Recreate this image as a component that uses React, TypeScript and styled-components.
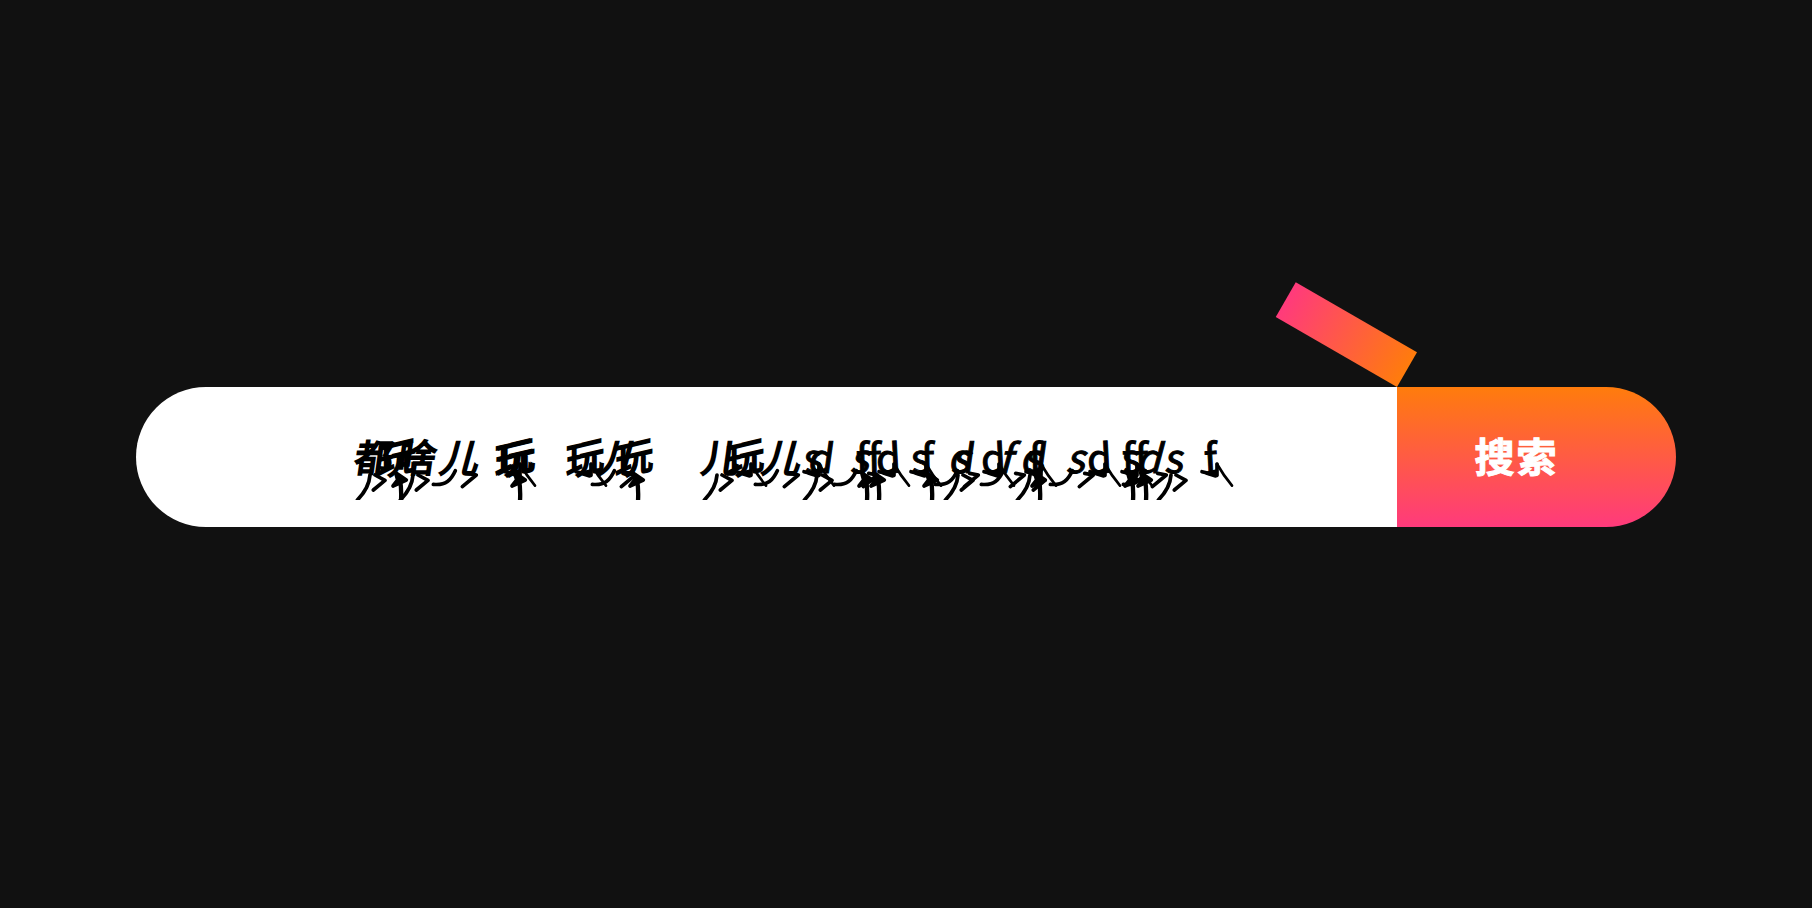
import React from "react";
import styled, { createGlobalStyle, css } from "styled-components";

type Pose = "lean" | "step" | "stand" | "stride";

const GlobalStyle = createGlobalStyle`
  body {
    margin: 0;
    background: #111;
    font-family: "Noto Sans CJK SC", "Noto Sans", sans-serif;
  }
`;

const Page = styled.main`
  box-sizing: border-box;
  min-height: 100vh;
  padding-top: 6px;
  display: flex;
  align-items: center;
  justify-content: center;
`;

const SearchBar = styled.form`
  position: relative;
  display: flex;
  width: 85%;
  height: 140px;
`;

const Field = styled.div`
  position: relative;
  flex: 1;
  display: flex;
`;

const TextBox = styled.input`
  flex: 1;
  min-width: 0;
  padding: 0 60px;
  border: 0;
  outline: 0;
  border-radius: 70px 0 0 70px;
  background: #fff;
  font: 40px "Noto Sans CJK SC", sans-serif;
`;

const Lid = styled.span`
  position: absolute;
  right: 0;
  bottom: 100%;
  width: 140px;
  height: 40px;
  background: linear-gradient(to right, #ff3a7c, #ff7c0c);
  transform: rotate(30deg);
  transform-origin: 100% 100%;
`;

const SubmitButton = styled.button`
  flex: 0 0 279px;
  padding: 0 40px 4px 0;
  border: 0;
  border-radius: 0 70px 70px 0;
  background: linear-gradient(#ff7c0c, #ff3a7c);
  color: #fff;
  font: bold 40px "Noto Sans CJK SC", sans-serif;
  letter-spacing: 2px;
  white-space: nowrap;
  -webkit-text-stroke: 1px #fff;
`;

const Crowd = styled.div`
  position: absolute;
  top: 33px;
  left: 0;
  width: 100%;
  height: 80px;
  overflow: hidden;
  pointer-events: none;
`;

const Walker = styled.span`
  position: absolute;
  top: 0;
  width: 60px;
  height: 80px;
  margin-left: -30px;
  display: grid;
  justify-items: center;

  & > * {
    grid-area: 1 / 1;
  }
`;

const latinTilt: Record<Pose, string> = {
  lean: "skewX(-8deg)",
  step: "rotate(-3deg)",
  stand: "rotate(-1deg)",
  stride: "skewX(-15deg)",
};

const hanTilt: Record<Pose, string> = {
  lean: "skewX(-8deg)",
  step: "skewY(-13deg)",
  stand: "skewY(-13deg)",
  stride: "skewX(-15deg)",
};

const Glyph = styled.span<{ $pose: Pose; $han: boolean }>`
  color: #000;
  font-size: 40px;
  line-height: 72px;
  -webkit-text-stroke: 1px #000;
  transform: ${(p) => (p.$han ? hanTilt : latinTilt)[p.$pose]};
  ${(p) =>
    p.$han &&
    css`
      font-size: 38px;
      -webkit-text-stroke: 2px #000;
    `}
`;

const Legs = styled.svg`
  align-self: end;
  width: 60px;
  height: 40px;
  fill: none;
  stroke: #000;
  stroke-width: 11;
  stroke-linecap: round;
  stroke-linejoin: round;
`;

const legPaths: Record<Pose, React.ReactNode> = {
  lean: <path d="M-12 165Q-15 205-50 240M3 165L33 181L-2 210" />,
  step: (
    <>
      <path d="M-27 155L18 166V132" />
      <path d="M-12 160L14 154V168Z" fill="#000" />
      <path d="M18 132Q36 164 63 197" strokeWidth="8" />
    </>
  ),
  stand: (
    <>
      <path d="M-4 158L28 180L-12 198L2 180Z" fill="#000" />
      <path d="M9 180Q14 205 12 244" strokeWidth="13" />
    </>
  ),
  stride: <path d="M-83 193C-45 197-30 180-17 152M20 160L46 165L4 200" />,
};

const walkers: [string, number, Pose][] = [
  ["都", 238, "lean"],
  ["玩", 261, "stand"],
  ["啥", 281, "lean"],
  ["儿", 325, "stride"],
  ["玩", 378, "step"],
  ["玩", 380, "stand"],
  ["玩", 449, "step"],
  ["儿", 484, "stride"],
  ["玩", 498, "stand"],
  ["儿", 585, "lean"],
  ["玩", 609, "step"],
  ["儿", 647, "stride"],
  ["s", 677, "step"],
  ["d", 685, "lean"],
  ["s", 726, "stride"],
  ["f", 727, "stand"],
  ["f", 739, "stand"],
  ["d", 752, "step"],
  ["s", 784, "step"],
  ["f", 792, "stand"],
  ["s", 827, "stride"],
  ["d", 826, "lean"],
  ["d", 857, "step"],
  ["f", 873, "stride"],
  ["d", 898, "lean"],
  ["s", 899, "step"],
  ["f", 900, "stand"],
  ["s", 942, "stride"],
  ["d", 963, "step"],
  ["f", 993, "stand"],
  ["s", 995, "step"],
  ["f", 1006, "stand"],
  ["d", 1015, "stride"],
  ["s", 1039, "lean"],
  ["f", 1075, "step"],
];

export default function App() {
  return (
    <>
      <GlobalStyle />
      <Page>
        <SearchBar role="search" onSubmit={(e) => e.preventDefault()}>
          <Field>
            <TextBox type="text" aria-label="搜索" />
            <Crowd>
              {walkers.map(([char, x, pose], i) => (
                <Walker key={i} style={{ left: x }}>
                  <Glyph $pose={pose} $han={char > "z"}>
                    {char}
                  </Glyph>
                  <Legs viewBox="-90 120 180 120" overflow="visible" aria-hidden="true">
                    {legPaths[pose]}
                  </Legs>
                </Walker>
              ))}
            </Crowd>
            <Lid />
          </Field>
          <SubmitButton type="submit">搜索</SubmitButton>
        </SearchBar>
      </Page>
    </>
  );
}
